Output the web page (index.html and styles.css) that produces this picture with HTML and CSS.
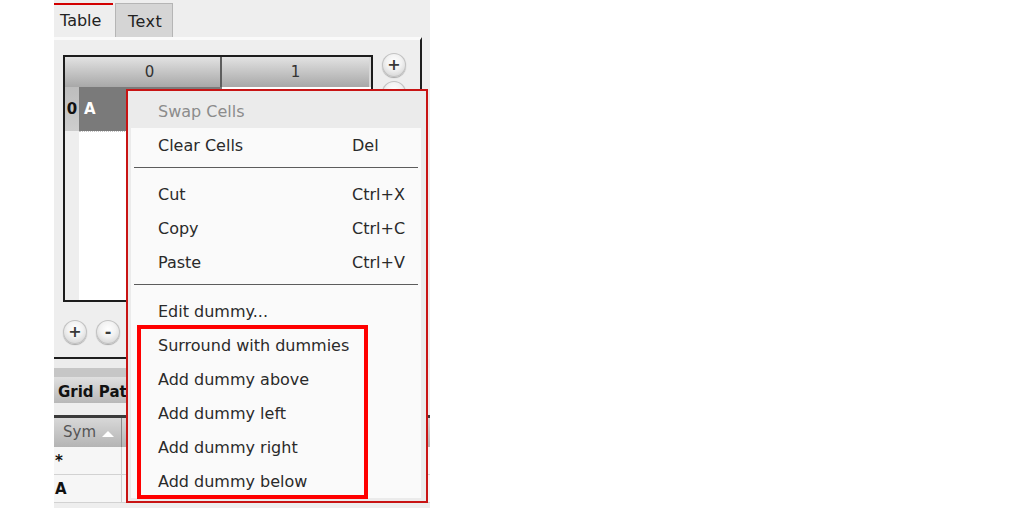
FILE: index.html
```html
<!DOCTYPE html>
<html>
<head>
<meta charset="utf-8">
<link rel="stylesheet" href="styles.css">
</head>
<body>
<div class="app">
  <div class="tabs">
    <div class="tab active">Table</div>
    <div class="tab plain">Text</div>
  </div>
  <div class="panel">
    <div class="editor">
      <div class="grid-frame">
        <div class="ghead">
          <div class="corner"></div>
          <div class="hcell c0">0</div>
          <div class="hcell c1">1</div>
        </div>
        <div class="grow">
          <div class="rhead">0</div>
          <div class="cell sel">A</div>
          <div class="cell empty"></div>
        </div>
        <div class="gbody">
          <div class="rfill"></div>
          <div class="bfill"></div>
        </div>
      </div>
      <div class="side-btns">
        <span class="rbtn">+</span>
        <span class="rbtn">-</span>
      </div>
    </div>
    <div class="row-btns">
      <span class="rbtn">+</span>
      <span class="rbtn">-</span>
    </div>
  </div>
  <div class="lower">
    <div class="band1"></div>
    <div class="gp-head">Grid Pattern</div>
    <div class="band2"></div>
    <div class="t2">
      <div class="t2head">
        <div class="sym">Sym<span class="tri"></span></div>
        <div class="rest"></div>
      </div>
      <div class="t2row">
        <div class="key">*</div>
        <div class="rest"></div>
      </div>
      <div class="t2row">
        <div class="key">A</div>
        <div class="rest"></div>
      </div>
    </div>
  </div>

  <div class="menu">
    <div class="swap">Swap Cells</div>
    <div class="mbody">
      <div class="mi"><span class="lbl">Clear Cells</span><span class="sc">Del</span></div>
      <div class="sep"></div>
      <div class="mi"><span class="lbl">Cut</span><span class="sc">Ctrl+X</span></div>
      <div class="mi"><span class="lbl">Copy</span><span class="sc">Ctrl+C</span></div>
      <div class="mi"><span class="lbl">Paste</span><span class="sc">Ctrl+V</span></div>
      <div class="sep"></div>
      <div class="mi"><span class="lbl">Edit dummy...</span></div>
      <div class="mi"><span class="lbl">Surround with dummies</span></div>
      <div class="mi"><span class="lbl">Add dummy above</span></div>
      <div class="mi"><span class="lbl">Add dummy left</span></div>
      <div class="mi"><span class="lbl">Add dummy right</span></div>
      <div class="mi"><span class="lbl">Add dummy below</span></div>
    </div>
  </div>
  <div class="annot"></div>
</div>
</body>
</html>
```

FILE: styles.css
```css
html, body {
  margin: 0;
  padding: 0;
  background: #ffffff;
}
body {
  font-family: "DejaVu Sans", sans-serif;
  width: 1013px;
  height: 508px;
  overflow: hidden;
}
.app {
  position: relative;
  margin-left: 54px;
  width: 376px;
  height: 508px;
  background: #eeeeee;
  display: flex;
  flex-direction: column;
}

/* tabs */
.tabs {
  display: flex;
  height: 37px;
  padding-top: 3px;
  box-sizing: border-box;
  gap: 2px;
  flex: none;
}
.tab {
  font-size: 16px;
  color: #222;
  box-sizing: border-box;
}
.tab.active {
  width: 59px;
  border-top: 2px solid #d20000;
  padding-left: 6px;
  line-height: 32px;
}
.tab.plain {
  width: 58px;
  background: #d5d5d5;
  border: 1px solid #b5b5b5;
  border-bottom: 0;
  padding: 3px 0 0 12px;
  line-height: 30px;
  letter-spacing: 0.5px;
}

/* panel */
.panel {
  flex: none;
  width: 368px;
  height: 322px;
  box-sizing: border-box;
  border-top: 3px solid #fafafa;
  border-right: 2px solid #1e1e1e;
  border-bottom: 2px solid #1e1e1e;
  padding: 15px 0 0 9px;
}
.editor {
  display: flex;
}
.grid-frame {
  width: 310px;
  height: 247px;
  box-sizing: border-box;
  border: 2px solid #1c1c1c;
  background: #efefef;
  display: flex;
  flex-direction: column;
}
.ghead {
  display: flex;
  height: 30px;
  flex: none;
  background: linear-gradient(#e2e2e2, #a8a8a8);
}
.corner {
  width: 14px;
}
.hcell {
  display: flex;
  align-items: center;
  justify-content: center;
  font-size: 15px;
  color: #333;
  box-sizing: border-box;
}
.hcell.c0 {
  width: 143px;
  border-right: 2px solid #5e5e5e;
}
.hcell.c1 {
  flex: 1;
  border-right: 2px solid #d8d8d8;
}
.grow {
  display: flex;
  height: 44px;
  flex: none;
}
.rhead {
  width: 14px;
  background: linear-gradient(#bdbdbd, #cdcdcd);
  font-weight: bold;
  font-size: 15px;
  color: #111;
  display: flex;
  align-items: center;
  justify-content: center;
}
.cell.sel {
  width: 143px;
  background: #7a7a7a;
  color: #fff;
  font-weight: bold;
  font-size: 15px;
  padding-left: 5px;
  line-height: 44px;
  box-sizing: border-box;
}
.cell.empty {
  flex: 1;
  background: #ffffff;
}
.gbody {
  flex: 1;
  display: flex;
}
.rfill {
  width: 14px;
  background: #eeeeee;
}
.bfill {
  flex: 1;
  background: #ffffff;
  border-top: 1px dotted #c4c4c4;
}
.side-btns {
  margin-left: 9px;
  margin-top: -2px;
  display: flex;
  flex-direction: column;
  gap: 4px;
}
.rbtn {
  width: 24px;
  height: 24px;
  border-radius: 50%;
  background: radial-gradient(circle at 50% 38%, #ffffff 0, #f2f2f2 40%, #c6c6c6 100%);
  box-shadow: 0 1px 1px rgba(0, 0, 0, 0.3), inset 0 0 0 1px #c2c2c2;
  display: flex;
  align-items: center;
  justify-content: center;
  font-size: 16px;
  font-weight: bold;
  color: #3a3a3a;
  line-height: 1;
}
.row-btns {
  display: flex;
  gap: 9px;
  margin-top: 18px;
}

/* lower section */
.lower {
  flex: 1;
  display: flex;
  flex-direction: column;
}
.band1 {
  height: 9px;
  background: #ececec;
}
.gp-head {
  height: 35px;
  box-sizing: border-box;
  margin-right: 2px;
  border-right: 1px solid #999;
  background: linear-gradient(#c6c6c6 0, #c6c6c6 9px, #e0e0e0 9px, #b8b8b8 100%);
  font-weight: bold;
  font-size: 15px;
  color: #111;
  padding: 14px 0 0 4px;
  line-height: 20px;
}
.band2 {
  height: 12px;
}
.t2 {
  border-top: 3px solid #3a3a3a;
}
.t2head {
  display: flex;
  height: 29px;
  background: linear-gradient(#d8d8d8, #b4b4b4);
}
.sym {
  width: 68px;
  box-sizing: border-box;
  border-right: 1px solid #8a8a8a;
  padding-left: 9px;
  color: #555;
  font-size: 15px;
  line-height: 29px;
  display: flex;
  align-items: center;
}
.tri {
  width: 0;
  height: 0;
  margin-left: 6px;
  margin-top: 3px;
  border-left: 6px solid transparent;
  border-right: 6px solid transparent;
  border-bottom: 6px solid #ffffff;
}
.rest {
  flex: 1;
}
.t2row {
  display: flex;
  height: 28px;
  box-sizing: border-box;
  border-bottom: 1px solid #d2d2d2;
  background: #f6f6f6;
}
.key {
  width: 68px;
  box-sizing: border-box;
  border-right: 1px solid #cfcfcf;
  font-weight: bold;
  font-size: 15px;
  color: #111;
  padding-left: 1px;
  line-height: 28px;
}

/* context menu */
.menu {
  position: absolute;
  left: 72px;
  top: 89px;
  width: 302px;
  height: 414px;
  box-sizing: border-box;
  border: 2px solid #c81414;
  background: #ebebeb;
  padding: 0 5px 3px 3px;
  font-size: 16px;
  color: #2a2a2a;
}
.swap {
  margin: 0 -5px 0 -3px;
  height: 37px;
  box-sizing: border-box;
  padding: 3px 0 0 30px;
  line-height: 35px;
  color: #8c8c8c;
}
.mbody {
  background: #fafafa;
}
.mi {
  display: flex;
  height: 34px;
  box-sizing: border-box;
  padding: 1px 0 0 27px;
  line-height: 34px;
}
.lbl {
  width: 194px;
  flex: none;
}
.sep {
  margin: 5px 3px 9px;
  border-top: 1px solid #5c5c5c;
}
.annot {
  position: absolute;
  left: 83px;
  top: 325px;
  width: 231px;
  height: 174px;
  box-sizing: border-box;
  border: 4px solid #ff0000;
}
```
